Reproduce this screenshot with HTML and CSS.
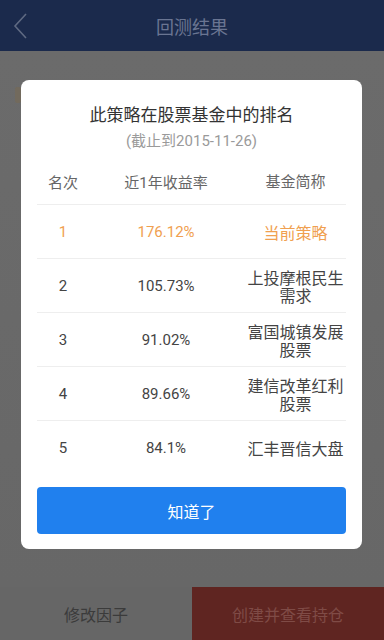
FILE: index.html
```html
<!DOCTYPE html>
<html lang="zh">
<head>
<meta charset="utf-8">
<link rel="stylesheet" href="styles.css">
</head>
<body>
<div class="screen">
  <header class="topbar">
    <svg class="back" width="16" height="26" viewBox="0 0 16 26"><path d="M13 1 L2 13 L13 25" fill="none" stroke="#5f6a82" stroke-width="1.6"/></svg>
    <div class="topbar-title">回测结果</div>
  </header>
  <main class="content">
    <div class="peek"></div>
  </main>
  <footer class="bottombar">
    <div class="btn-left">修改因子</div>
    <div class="btn-right">创建并查看持仓</div>
  </footer>

  <div class="modal">
    <div class="modal-title">此策略在股票基金中的排名</div>
    <div class="modal-sub">(截止到2015-11-26)</div>
    <div class="table">
      <div class="row head">
        <div class="c1">名次</div><div class="c2">近1年收益率</div><div class="c3">基金简称</div>
      </div>
      <div class="row cur">
        <div class="c1 num">1</div><div class="c2 num">176.12%</div><div class="c3">当前策略</div>
      </div>
      <div class="row">
        <div class="c1 num">2</div><div class="c2 num">105.73%</div><div class="c3">上投摩根民生需求</div>
      </div>
      <div class="row">
        <div class="c1 num">3</div><div class="c2 num">91.02%</div><div class="c3">富国城镇发展股票</div>
      </div>
      <div class="row">
        <div class="c1 num">4</div><div class="c2 num">89.66%</div><div class="c3">建信改革红利股票</div>
      </div>
      <div class="row last">
        <div class="c1 num">5</div><div class="c2 num">84.1%</div><div class="c3">汇丰晋信大盘</div>
      </div>
    </div>
    <div class="ok">知道了</div>
  </div>
</div>
</body>
</html>
```
FILE: styles.css
```css
* { box-sizing: border-box; }
html, body { margin: 0; padding: 0; }
body {
  font-family: Roboto, "Noto Sans CJK SC", sans-serif;
  width: 384px; height: 640px; overflow: hidden;
}
.screen {
  position: relative;
  width: 384px; height: 640px;
  display: flex; flex-direction: column;
  background: #696969;
}
.topbar {
  height: 51px;
  background: #1b2a4c;
  position: relative;
  display: flex; align-items: center; justify-content: center;
}
.back { position: absolute; left: 13px; top: 13px; }
.topbar-title {
  color: #6a7592;
  font-size: 18px;
  font-family: "Noto Sans CJK SC", sans-serif;
}
.content {
  flex: 1;
  background: linear-gradient(180deg, #6b6b6b 0%, #676767 100%);
  position: relative;
}
.peek {
  position: absolute; left: 15px; top: 36px;
  width: 6px; height: 16px;
  background: #7a6a50; opacity: .5; border-radius: 2px;
}
.bottombar {
  height: 53px;
  display: flex;
}
.btn-left, .btn-right {
  flex: 1;
  display: flex; align-items: center; justify-content: center;
  font-family: "Noto Sans CJK SC", sans-serif;
  font-size: 16px;
}
.btn-left { background: #666; color: #3b3b3b; }
.btn-right { background: #5f2521; color: #7f4b46; }

.modal {
  position: absolute;
  left: 21px; top: 80px;
  width: 341px; height: 469px;
  background: #fff;
  border-radius: 8px;
  padding: 0 16px;
  display: flex; flex-direction: column;
}
.modal-title {
  margin-top: 22px;
  text-align: center;
  font-family: "Noto Sans CJK SC", sans-serif;
  font-size: 17px;
  line-height: 24px;
  color: #333;
}
.modal-sub {
  margin-top: 5px;
  text-align: center;
  font-size: 15px;
  line-height: 20px;
  color: #9a9a9a;
}
.table { margin-top: 7px; }
.row {
  display: grid;
  grid-template-columns: 52px 154px 105px;
  align-items: center;
  height: 54px;
  border-bottom: 1px solid #eeeeee;
  color: #444;
  font-size: 15px;
}
.row.head { height: 47px; color: #666; }
.row.last { border-bottom: none; }
.row > div { text-align: center; }
.c3 {
  font-family: "Noto Sans CJK SC", sans-serif;
  font-size: 16px;
  line-height: 18px;
  padding: 0 2px;
}
.row.head .c3 { font-size: 15px; }
.row.cur { color: #f0a050; }
.ok {
  margin-top: 12px;
  height: 47px;
  background: #2080ee;
  border-radius: 4px;
  color: #fff;
  font-family: "Noto Sans CJK SC", sans-serif;
  font-size: 16px;
  display: flex; align-items: center; justify-content: center;
}
```
